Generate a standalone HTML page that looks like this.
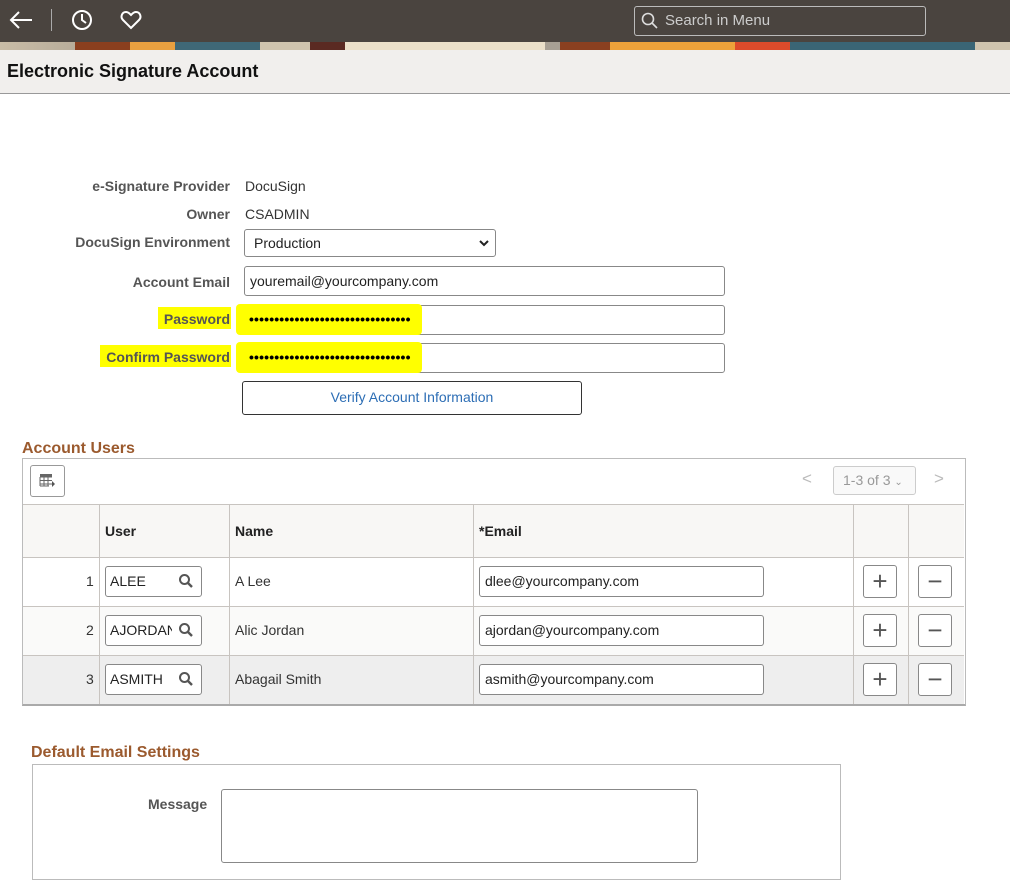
<!DOCTYPE html>
<html><head><meta charset="utf-8"><style>
*{box-sizing:border-box;margin:0;padding:0}
body{width:1010px;height:894px;background:#fff;font-family:"Liberation Sans",Arial,sans-serif;font-size:14px;color:#333;position:relative;overflow:hidden}
.a{position:absolute}
.lbl{position:absolute;right:780px;font-weight:bold;color:#555;font-size:14px;white-space:nowrap}
.inp{position:absolute;border:1px solid #888;border-radius:3px;background:#fff;font-size:14px;color:#222;padding-left:5px}
.hl{position:absolute;background:#ffff00}
.sec{position:absolute;color:#9b5a2e;font-weight:bold;font-size:16px}
.vl{position:absolute;top:504px;height:200px;width:1px;background:#c8c4c0}
.hr{position:absolute;left:23px;width:941px;height:1px;background:#c8c4c0}
.btn{position:absolute;width:34px;height:33px;border:1px solid #888;border-radius:3px;background:#fff;color:#555;font-size:26px;line-height:30px;text-align:center}
.num{position:absolute;left:80px;font-size:14px}
.dots{position:absolute;left:249px;font-size:14px;font-weight:bold;letter-spacing:0.15px;color:#000;white-space:nowrap}
</style></head><body>
<div class="a" style="left:0;top:0;width:1010px;height:42px;background:#4a443f"></div>
<div class="a" style="left:0;top:42px;width:1010px;height:8px;background:linear-gradient(90deg,#c9bca6 0,#b8ad9a 75px,#8a3f1e 75px,#8a3f1e 130px,#e8a040 130px,#e8a040 175px,#3f6877 175px,#3f6877 260px,#cfc4ae 260px,#cfc4ae 310px,#5a2a22 310px,#5a2a22 345px,#ebe0c9 345px,#ebe0c9 545px,#a8a094 545px,#a8a094 560px,#8a4020 560px,#8a4020 610px,#eda23a 610px,#eda23a 735px,#dd4b2b 735px,#dd4b2b 790px,#3a6575 790px,#3a6575 975px,#cfc4ae 975px)"></div>
<svg class="a" style="left:8px;top:9px" width="26" height="22" viewBox="0 0 26 22"><path d="M24 11H3M11 3L3 11L11 19" stroke="#fff" stroke-width="2" fill="none"/></svg>
<div class="a" style="left:51px;top:9px;width:1px;height:22px;background:#aaa"></div>
<svg class="a" style="left:71px;top:9px" width="22" height="22" viewBox="0 0 22 22"><circle cx="11" cy="11" r="9" stroke="#fff" stroke-width="2" fill="none"/><path d="M11 5V11L15 14" stroke="#fff" stroke-width="2" fill="none"/></svg>
<svg class="a" style="left:120px;top:10px" width="22" height="20" viewBox="0 0 22 20"><path d="M11 18L3 10C0 7 2 2 6 2C8.5 2 10 4 11 5C12 4 13.5 2 16 2C20 2 22 7 19 10Z" stroke="#fff" stroke-width="2" fill="none"/></svg>
<div class="a" style="left:634px;top:6px;width:292px;height:30px;border:1px solid #bbb;border-radius:3px"></div>
<svg class="a" style="left:641px;top:12px" width="18" height="18" viewBox="0 0 18 18"><circle cx="7" cy="7" r="5.5" stroke="#ddd" stroke-width="1.6" fill="none"/><path d="M11 11L16 16" stroke="#ddd" stroke-width="1.6"/></svg>
<div class="a" style="left:665px;top:12px;color:#ccc;font-size:15px">Search in Menu</div>
<div class="a" style="left:0;top:50px;width:1010px;height:44px;background:#f1efed;border-bottom:1px solid #999"></div>
<div class="a" style="left:7px;top:61px;font-size:18px;font-weight:bold;color:#111">Electronic Signature Account</div>

<div class="hl" style="left:158px;top:307px;width:73px;height:22px"></div>
<div class="hl" style="left:100px;top:345px;width:131px;height:22px"></div>
<div class="lbl" style="top:178px">e-Signature Provider</div>
<div class="a" style="left:245px;top:178px">DocuSign</div>
<div class="lbl" style="top:206px">Owner</div>
<div class="a" style="left:245px;top:206px">CSADMIN</div>
<div class="lbl" style="top:234px">DocuSign Environment</div>
<div class="inp" style="left:244px;top:229px;width:252px;height:28px;padding-left:9px;line-height:26px">Production<svg style="position:absolute;right:6px;top:10px" width="10" height="7" viewBox="0 0 10 7"><path d="M1 1L5 5L9 1" stroke="#222" stroke-width="2" fill="none"/></svg></div>
<div class="lbl" style="top:274px">Account Email</div>
<div class="inp" style="left:244px;top:266px;width:481px;height:30px;line-height:28px">youremail@yourcompany.com</div>
<div class="lbl" style="top:311px">Password</div>
<div class="inp" style="left:244px;top:305px;width:481px;height:30px"></div>
<div class="hl" style="left:236px;top:304px;width:186px;height:31px;border-radius:4px"></div>
<div class="dots" style="top:311px">••••••••••••••••••••••••••••••••</div>
<div class="lbl" style="top:349px">Confirm Password</div>
<div class="inp" style="left:244px;top:343px;width:481px;height:30px"></div>
<div class="hl" style="left:236px;top:342px;width:186px;height:31px;border-radius:4px"></div>
<div class="dots" style="top:349px">••••••••••••••••••••••••••••••••</div>
<div class="a" style="left:242px;top:381px;width:340px;height:34px;border:1px solid #333;border-radius:3px;text-align:center;line-height:31px;color:#2d6eb5">Verify Account Information</div>

<div class="sec" style="left:22px;top:440px">Account Users</div>
<div class="a" style="left:22px;top:458px;width:944px;height:248px;border:1px solid #bbb;border-bottom:2px solid #aaa"></div>
<div class="a" style="left:23px;top:504px;width:941px;height:53px;background:#f8f7f5"></div>
<div class="a" style="left:23px;top:606px;width:941px;height:49px;background:#fafaf9"></div>
<div class="a" style="left:23px;top:655px;width:941px;height:49px;background:#eeeeee"></div>
<div class="hr" style="top:504px"></div><div class="hr" style="top:557px"></div><div class="hr" style="top:606px"></div><div class="hr" style="top:655px"></div>
<div class="vl" style="left:99px"></div><div class="vl" style="left:229px"></div><div class="vl" style="left:473px"></div><div class="vl" style="left:853px"></div><div class="vl" style="left:908px"></div>
<div class="a" style="left:30px;top:465px;width:35px;height:32px;border:1px solid #999;border-radius:3px"></div>
<svg class="a" style="left:39px;top:473px" width="18" height="16" viewBox="0 0 18 16"><rect x="1" y="1" width="12" height="3" fill="#666"/><path d="M1 4H13M1 7.5H13M1 11H13M1 4V13M5 4V13M9 4V13M1 13H10" stroke="#666" stroke-width="1" fill="none"/><path d="M13 8L16 11L13 14Z" fill="#555"/></svg>
<div class="a" style="left:802px;top:469px;color:#bbb;font-size:17px">&lt;</div>
<div class="a" style="left:833px;top:466px;width:83px;height:29px;border:1px solid #ccc;border-radius:3px;color:#999;font-size:14px;line-height:27px;padding-left:9px;background:#f9f9f9">1-3 of 3 <span style="font-size:10px">⌄</span></div>
<div class="a" style="left:934px;top:469px;color:#bbb;font-size:17px">&gt;</div>
<div class="a" style="left:105px;top:523px;font-weight:bold;color:#222">User</div>
<div class="a" style="left:235px;top:523px;font-weight:bold;color:#222">Name</div>
<div class="a" style="left:479px;top:523px;font-weight:bold;color:#222">*Email</div>

<div class="num" style="left:86px;top:573px">1</div>
<div class="num" style="left:86px;top:622px">2</div>
<div class="num" style="left:86px;top:671px">3</div>
<div class="inp" style="left:105px;top:566px;width:97px;height:31px;line-height:29px;padding-left:4px;overflow:hidden">ALEE</div>
<div class="inp" style="left:105px;top:615px;width:97px;height:31px;line-height:29px;padding-left:4px;overflow:hidden;white-space:nowrap"><span style="display:inline-block;width:62px;overflow:hidden;vertical-align:top">AJORDAN</span></div>
<div class="inp" style="left:105px;top:664px;width:97px;height:31px;line-height:29px;padding-left:4px">ASMITH</div>
<svg class="a" style="left:178px;top:573px" width="16" height="16" viewBox="0 0 16 16"><circle cx="6.5" cy="6.5" r="4.5" stroke="#555" stroke-width="2" fill="none"/><path d="M10 10L14 14" stroke="#555" stroke-width="2.4"/></svg>
<svg class="a" style="left:178px;top:622px" width="16" height="16" viewBox="0 0 16 16"><circle cx="6.5" cy="6.5" r="4.5" stroke="#555" stroke-width="2" fill="none"/><path d="M10 10L14 14" stroke="#555" stroke-width="2.4"/></svg>
<svg class="a" style="left:178px;top:671px" width="16" height="16" viewBox="0 0 16 16"><circle cx="6.5" cy="6.5" r="4.5" stroke="#555" stroke-width="2" fill="none"/><path d="M10 10L14 14" stroke="#555" stroke-width="2.4"/></svg>
<div class="a" style="left:235px;top:573px">A Lee</div>
<div class="a" style="left:235px;top:622px">Alic Jordan</div>
<div class="a" style="left:235px;top:671px">Abagail Smith</div>
<div class="inp" style="left:479px;top:566px;width:285px;height:31px;line-height:29px">dlee@yourcompany.com</div>
<div class="inp" style="left:479px;top:615px;width:285px;height:31px;line-height:29px">ajordan@yourcompany.com</div>
<div class="inp" style="left:479px;top:664px;width:285px;height:31px;line-height:29px">asmith@yourcompany.com</div>
<div class="btn" style="left:863px;top:565px">+</div><div class="btn" style="left:918px;top:565px">−</div>
<div class="btn" style="left:863px;top:614px">+</div><div class="btn" style="left:918px;top:614px">−</div>
<div class="btn" style="left:863px;top:663px">+</div><div class="btn" style="left:918px;top:663px">−</div>

<div class="sec" style="left:31px;top:744px">Default Email Settings</div>
<div class="a" style="left:32px;top:764px;width:809px;height:116px;border:1px solid #bbb"></div>
<div class="a" style="left:148px;top:796px;font-weight:bold;color:#555">Message</div>
<div class="a" style="left:221px;top:789px;width:477px;height:74px;border:1px solid #888;border-radius:3px"></div>
</body></html>
